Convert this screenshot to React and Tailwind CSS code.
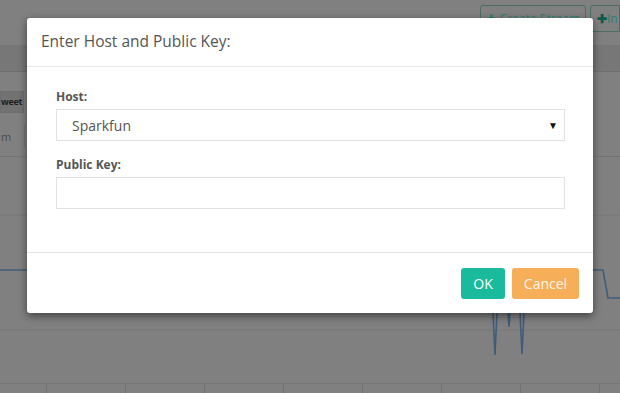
import React from "react";

function Background() {
  return (
    <div className="w-[620px] h-[393px] bg-[#808080] flex flex-col overflow-hidden" style={{ fontFamily: '"Open Sans", sans-serif' }}>
      <div className="h-[45px] flex justify-end items-start pt-[5px] gap-[4px]">
        <div className="w-[106px] h-[27px] border border-[#4c6e64] rounded-[3px] flex items-center justify-center text-[12px] text-[#2f7f6e]">
          <span className="mr-1">✚</span>Create Stream
        </div>
        <div className="w-[30px] h-[27px] border border-[#4c6e64] rounded-l-[3px] flex items-center pl-[6px] text-[12px] text-[#0f5a48] whitespace-nowrap">
          <span className="font-bold">✚</span>
          <span className="text-[#2f7f6e]">In</span>
        </div>
      </div>
      <div className="h-[27px] bg-[#777777] border-b border-[#6f6f6f]" />
      <div className="h-[85px] flex flex-col">
        <div className="h-[19px]" />
        <div className="h-[22px] self-start bg-[#727272] border border-[#6e6e6e] flex items-center text-[9px] tracking-[-0.3px] font-bold text-[#1f1f1f] pr-[1px]">
          <span className="whitespace-nowrap">weet</span>
        </div>
        <div className="h-[12px]" />
        <div className="h-[23px] flex items-center">
          <span className="w-[25px] text-[11px] text-[#4d4d4d] border-r border-[#737373] leading-[23px] pl-[1px]">m</span>
        </div>
        <div className="flex-1 border-b border-[#747474]" />
      </div>
      <svg width="620" height="226" className="block">
        <line x1="0" y1="58" x2="620" y2="58" stroke="#767676" strokeWidth="1" />
        <line x1="0" y1="173" x2="620" y2="173" stroke="#767676" strokeWidth="1" />
        <path
          d="M0 113 L488 113 L491 113 L495 198 L499 113 L505 113 L509 170 L513 113 L518 113 L522 197 L526 113 L603 113 L608 141 L620 141"
          fill="none"
          stroke="#3f5d7a"
          strokeWidth="1.6"
        />
      </svg>
      <div className="flex-1 flex border-t border-[#767676]">
        <div className="w-[47px] border-r border-[#727272]" />
        <div className="w-[79px] border-r border-[#727272]" />
        <div className="w-[79px] border-r border-[#727272]" />
        <div className="w-[79px] border-r border-[#727272]" />
        <div className="w-[79px] border-r border-[#727272]" />
        <div className="w-[79px] border-r border-[#727272]" />
        <div className="w-[79px] border-r border-[#727272]" />
        <div className="w-[79px] border-r border-[#727272]" />
      </div>
    </div>
  );
}

export default function App() {
  return (
    <div className="relative w-[620px] h-[393px] overflow-hidden" style={{ fontFamily: '"Open Sans", sans-serif' }}>
      <Background />
      <div className="absolute left-[27px] top-[18px] w-[566px] h-[295px] bg-white rounded-[3px] shadow-[0_3px_9px_rgba(0,0,0,0.5)] flex flex-col">
        <div className="h-[49px] border-b border-[#e5e5e5] flex items-center px-[14px]">
          <h4 className="text-[15.5px] text-[#555555] leading-none">Enter Host and Public Key:</h4>
        </div>
        <div className="flex-1 flex flex-col px-[29px] pt-[21px]">
          <label className="text-[12px] font-bold text-[#555555] leading-[17px]">Host:</label>
          <div className="mt-[4px] h-[32px] w-[509px] border border-[#e2e2e2] flex items-center justify-between pl-[15px] pr-[6px]">
            <span className="text-[14px] text-[#555555]">Sparkfun</span>
            <span className="text-[10px] text-[#111]">▼</span>
          </div>
          <label className="mt-[15px] text-[12px] font-bold text-[#555555] leading-[17px]">Public Key:</label>
          <div className="mt-[4px] h-[32px] w-[509px] border border-[#e2e2e2]" />
        </div>
        <div className="h-[61px] border-t border-[#e5e5e5] flex items-center justify-end gap-[7px] pr-[14px]">
          <button className="h-[31px] w-[44px] rounded-[3px] bg-[#1abb9c] text-white text-[14px]">OK</button>
          <button className="h-[31px] w-[67px] rounded-[3px] bg-[#f6ae58] text-[#fff7ea] text-[14px]">Cancel</button>
        </div>
      </div>
    </div>
  );
}
